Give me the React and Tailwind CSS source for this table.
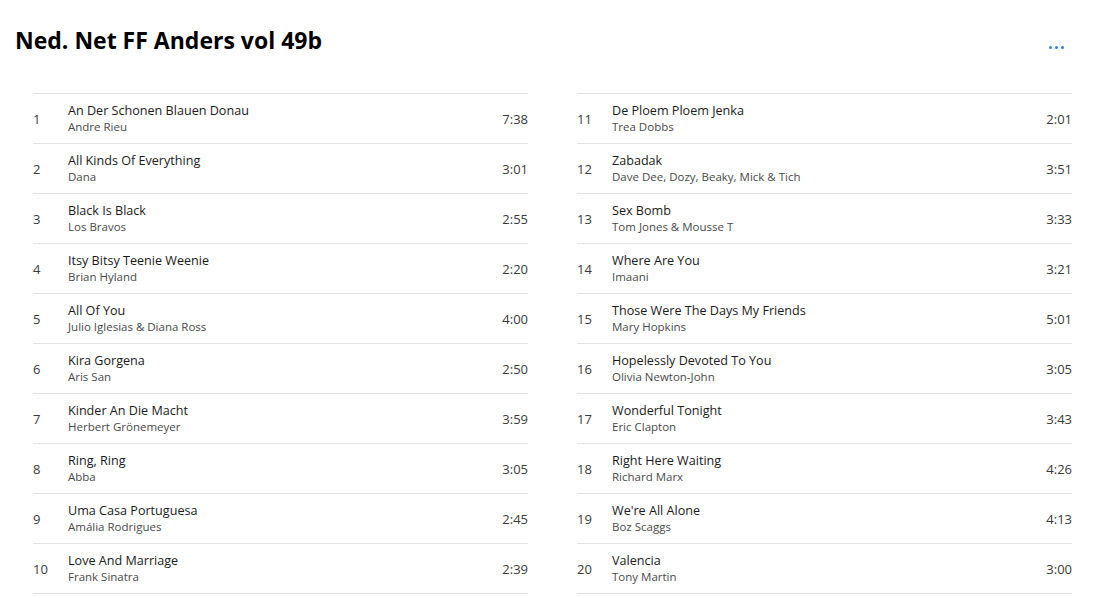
const tracks = [
  ["An Der Schonen Blauen Donau", "Andre Rieu", "7:38"],
  ["All Kinds Of Everything", "Dana", "3:01"],
  ["Black Is Black", "Los Bravos", "2:55"],
  ["Itsy Bitsy Teenie Weenie", "Brian Hyland", "2:20"],
  ["All Of You", "Julio Iglesias & Diana Ross", "4:00"],
  ["Kira Gorgena", "Aris San", "2:50"],
  ["Kinder An Die Macht", "Herbert Grönemeyer", "3:59"],
  ["Ring, Ring", "Abba", "3:05"],
  ["Uma Casa Portuguesa", "Amália Rodrigues", "2:45"],
  ["Love And Marriage", "Frank Sinatra", "2:39"],
  ["De Ploem Ploem Jenka", "Trea Dobbs", "2:01"],
  ["Zabadak", "Dave Dee, Dozy, Beaky, Mick & Tich", "3:51"],
  ["Sex Bomb", "Tom Jones & Mousse T", "3:33"],
  ["Where Are You", "Imaani", "3:21"],
  ["Those Were The Days My Friends", "Mary Hopkins", "5:01"],
  ["Hopelessly Devoted To You", "Olivia Newton-John", "3:05"],
  ["Wonderful Tonight", "Eric Clapton", "3:43"],
  ["Right Here Waiting", "Richard Marx", "4:26"],
  ["We're All Alone", "Boz Scaggs", "4:13"],
  ["Valencia", "Tony Martin", "3:00"],
];

function TrackRow({ n, title, artist, time }) {
  return (
    <div className="flex h-[50px] items-center border-b border-[#e3e3e3]">
      <div className="w-[35px] pt-[2px] text-[13px] text-[#3a3a3a]">{n}</div>
      <div className="flex-1 flex flex-col">
        <span className="text-[12.6px] leading-[17px] text-[#1a1a1a]">{title}</span>
        <span className="text-[11.5px] leading-[16px] text-[#4a4a4a]">{artist}</span>
      </div>
      <div className="pt-[2px] text-[13px] text-[#3a3a3a]">{time}</div>
    </div>
  );
}

export default function App() {
  const left = tracks.slice(0, 10);
  const right = tracks.slice(10);
  return (
    <div
      className="w-[1103px] h-[598px] overflow-hidden bg-white"
      style={{ fontFamily: '"Open Sans", "Noto Sans", sans-serif' }}
    >
      <div className="flex items-start justify-between pl-[15px] pr-[32px] pt-[24px]">
        <h1 className="text-[23px] leading-[32px] font-bold text-black">Ned. Net FF Anders vol 49b</h1>
        <button className="mt-[8px] flex h-[30px] w-[30px] items-center justify-center gap-[3px] rounded-full">
          <span className="h-[3px] w-[3px] rounded-full bg-[#2f7fd8]" />
          <span className="h-[3px] w-[3px] rounded-full bg-[#2f7fd8]" />
          <span className="h-[3px] w-[3px] rounded-full bg-[#2f7fd8]" />
        </button>
      </div>

      {/* TRACK LIST */}
      <div className="mt-[31px] ml-[33px] grid w-[1039px] grid-cols-2 gap-x-[49px]">
        <div className="border-t border-[#e3e3e3]">
          {left.map((t, i) => (
            <TrackRow key={i} n={i + 1} title={t[0]} artist={t[1]} time={t[2]} />
          ))}
        </div>
        <div className="border-t border-[#e3e3e3]">
          {right.map((t, i) => (
            <TrackRow key={i} n={i + 11} title={t[0]} artist={t[1]} time={t[2]} />
          ))}
        </div>
      </div>
    </div>
  );
}
